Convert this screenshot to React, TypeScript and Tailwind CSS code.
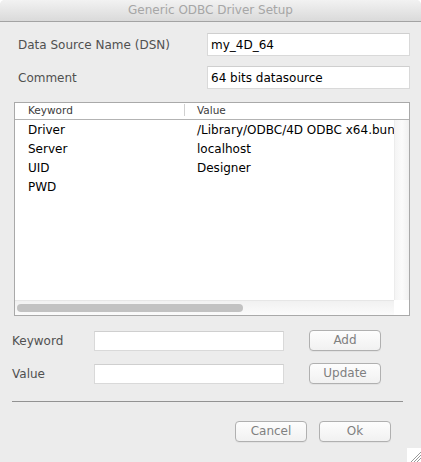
import React from "react";

const FONT = "font-['Lucida_Grande','DejaVu_Sans',sans-serif]";

const ROWS = [
  { key: "Driver", value: "/Library/ODBC/4D ODBC x64.bundle" },
  { key: "Server", value: "localhost" },
  { key: "UID", value: "Designer" },
  { key: "PWD", value: "" },
];

function MacButton({ label, className = "" }: { label: string; className?: string }) {
  return (
    <button
      className={`h-[21px] w-[72px] rounded-[4px] border border-[#b0b0b0] bg-gradient-to-b from-[#fdfdfd] to-[#f1f1f1] text-[12px] leading-[19px] text-[#808080] shadow-[0_1px_0_rgba(0,0,0,0.04)] ${className}`}
    >
      {label}
    </button>
  );
}

function Field({ value = "", className = "" }: { value?: string; className?: string }) {
  return (
    <div
      className={`flex items-center border border-[#d9d9d9] border-t-[#cfcfcf] bg-white pl-[3px] text-[12px] text-black ${className}`}
    >
      {value}
    </div>
  );
}

export default function App() {
  return (
    <div className={`relative h-[462px] w-[421px] overflow-hidden rounded-t-[5px] bg-[#ececec] ${FONT}`}>
      {/* title bar */}
      <div className="h-[22px] border-b border-[#a3a3a3] bg-gradient-to-b from-[#f2f2f2] to-[#dadada] text-center text-[12px] leading-[21px] text-[#a6a6a6]">
        Generic ODBC Driver Setup
      </div>

      <div className="pt-[11px]">
        <div className="flex h-[23px] items-center">
          <span className="w-[207px] pl-[18px] text-[12px] text-[#505050]">Data Source Name (DSN)</span>
          <Field value="my_4D_64" className="h-full w-[203px]" />
        </div>
        <div className="mt-[10px] flex h-[23px] items-center">
          <span className="w-[207px] pl-[18px] text-[12px] text-[#505050]">Comment</span>
          <Field value="64 bits datasource" className="h-full w-[203px]" />
        </div>

        {/* keyword / value table */}
        <div className="ml-[14px] mt-[13px] flex h-[214px] w-[396px] flex-col border border-[#a9a9a9] bg-white">
          <div className="flex h-[17px] shrink-0 items-center border-b border-[#b3b3b3] text-[10.5px] text-[#3c3c3c]">
            <div className="relative w-[170px] pl-[13px]">
              Keyword
              <span className="absolute right-0 top-[1px] h-[12px] w-px bg-[#d0d0d0]" />
            </div>
            <div className="pl-[12px]">Value</div>
          </div>
          <div className="flex min-h-0 flex-1">
            <div className="min-w-0 flex-1 overflow-hidden">
              {ROWS.map((r) => (
                <div key={r.key} className="flex h-[19px] items-center whitespace-nowrap text-[12px] text-black">
                  <span className="w-[170px] shrink-0 pl-[13px]">{r.key}</span>
                  <span className="pl-[12px]">{r.value}</span>
                </div>
              ))}
            </div>
            <div className="w-[15px] shrink-0 border-l border-[#ececec] bg-gradient-to-r from-[#f4f4f4] via-[#fbfbfb] to-[#f0f0f0]" />
          </div>
          <div className="flex h-[15px] shrink-0">
            <div className="flex flex-1 items-center border-t border-[#e6e6e6] bg-gradient-to-b from-[#f1f1f1] to-[#fbfbfb] pl-[2px]">
              <div className="h-[8px] w-[226px] rounded-full bg-[#c2c2c2]" />
            </div>
            <div className="w-[15px] bg-white" />
          </div>
        </div>

        {/* edit row */}
        <div className="mt-[14px] flex h-[21px] items-center">
          <span className="w-[94px] pl-[12px] text-[12px] text-[#505050]">Keyword</span>
          <Field className="h-[20px] w-[190px]" />
          <MacButton label="Add" className="ml-[25px]" />
        </div>
        <div className="mt-[12px] flex h-[21px] items-center">
          <span className="w-[94px] pl-[12px] text-[12px] text-[#505050]">Value</span>
          <Field className="h-[20px] w-[190px]" />
          <MacButton label="Update" className="ml-[25px]" />
        </div>

        <div className="ml-[12px] mt-[17px] h-px w-[391px] bg-[#929292]" />

        <div className="mt-[19px] flex pl-[235px]">
          <MacButton label="Cancel" />
          <MacButton label="Ok" className="ml-[12px]" />
        </div>
      </div>

      {/* resize grip */}
      <div className="absolute bottom-0 right-0 h-[14px] w-[14px] bg-white">
        <svg width="14" height="14" viewBox="0 0 14 14">
          <path d="M4 14 L14 4 M7 14 L14 7 M10 14 L14 10" stroke="#9a9a9a" strokeWidth="1" />
        </svg>
      </div>
    </div>
  );
}
